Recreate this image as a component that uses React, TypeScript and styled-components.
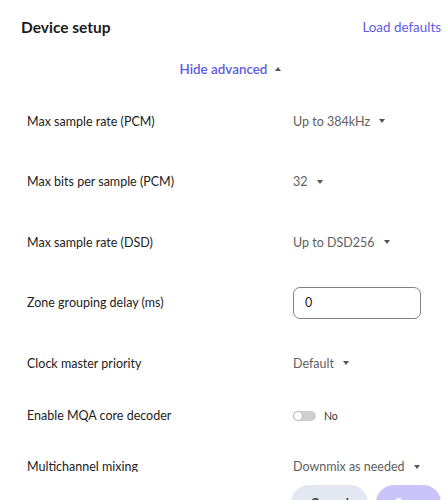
import React from "react";
import styled, { createGlobalStyle } from "styled-components";

const Global = createGlobalStyle`
  html, body { margin: 0; padding: 0; background: #fff; }
  body { font-family: Lato, "Noto Sans", sans-serif; color: #222; }
  * { box-sizing: border-box; }
`;

const Page = styled.div`
  width: 446px;
  height: 500px;
  overflow: hidden;
  display: flex;
  flex-direction: column;
  & > * { flex-shrink: 0; }
`;

const Header = styled.div`
  height: 54px;
  display: flex;
  align-items: center;
  justify-content: space-between;
  padding: 0 5px 0 21px;
`;

const Title = styled.h1`
  margin: 0;
  font-size: 15.5px;
  font-weight: 700;
  color: #1c1c1c;
`;

const LinkButton = styled.button<{ $bold?: boolean }>`
  border: 0;
  background: none;
  padding: 0 0 0 ${(p) => (p.$bold ? 15 : 0)}px;
  font-family: inherit;
  font-size: 13.4px;
  font-weight: ${(p) => (p.$bold ? 600 : 400)};
  color: #5b5be6;
  display: inline-flex;
  align-items: center;
  gap: 8px;
  cursor: pointer;
`;

const AdvancedBar = styled.div`
  height: 30px;
  display: flex;
  align-items: center;
  justify-content: center;
  margin-bottom: 7px;
`;

const Scroll = styled.div`
  height: 381px;
  overflow: hidden;
  padding-left: 27px;
`;

const Row = styled.div<{ $h?: number }>`
  height: ${(p) => p.$h ?? 60.5}px;
  display: grid;
  grid-template-columns: 266px 1fr;
  align-items: center;
`;

const Label = styled.div`
  font-size: 12.5px;
  color: #222;
`;

const Select = styled.div`
  display: inline-flex;
  align-items: center;
  gap: 9px;
  font-size: 12.5px;
  color: #5e5e5e;
`;

const Caret = styled.span<{ $up?: boolean }>`
  width: 0;
  height: 0;
  color: #555;
  border-left: 3.5px solid transparent;
  border-right: 3.5px solid transparent;
  ${(p) => (p.$up ? "border-bottom: 4px solid currentColor;" : "border-top: 4px solid currentColor;")}
`;

const Input = styled.input`
  width: 128px;
  height: 32px;
  border: 1px solid #808080;
  border-radius: 7px;
  padding: 0 11px;
  font-family: inherit;
  font-size: 12.5px;
  color: #222;
  outline: none;
`;

const ToggleWrap = styled.div`
  display: inline-flex;
  align-items: center;
  gap: 8px;
  font-size: 10.5px;
  color: #333;
`;

const Track = styled.span`
  position: relative;
  width: 23px;
  height: 10px;
  border-radius: 5px;
  background: #cfcfcf;
`;

const Thumb = styled.span`
  position: absolute;
  left: 0;
  top: 0;
  width: 10px;
  height: 10px;
  border-radius: 50%;
  background: #fff;
  border: 1px solid #b5b5b5;
`;

const Footer = styled.div`
  display: flex;
  justify-content: flex-end;
  gap: 8px;
  padding: 13px 5px 0 0;
`;

const Btn = styled.button<{ $primary?: boolean }>`
  height: 36px;
  border: 0;
  border-radius: 18px;
  padding: 0;
  width: ${(p) => (p.$primary ? 65 : 77)}px;
  background: ${(p) => (p.$primary ? "#c9c4f9" : "#e3e7f1")};
  color: ${(p) => (p.$primary ? "#fff" : "#333")};
  font-family: inherit;
  font-size: 13px;
  font-weight: 600;
`;

const Dropdown = ({ value }: { value: string }) => (
  <Select>
    {value}
    <Caret />
  </Select>
);

export default function App() {
  return (
    <Page>
      <Global />
      <Header>
        <Title>Device setup</Title>
        <LinkButton>Load defaults</LinkButton>
      </Header>
      <AdvancedBar>
        <LinkButton $bold>
          Hide advanced
          <Caret $up />
        </LinkButton>
      </AdvancedBar>
      <Scroll>
        <Row>
          <Label>Max sample rate (PCM)</Label>
          <Dropdown value="Up to 384kHz" />
        </Row>
        <Row>
          <Label>Max bits per sample (PCM)</Label>
          <Dropdown value="32" />
        </Row>
        <Row>
          <Label>Max sample rate (DSD)</Label>
          <Dropdown value="Up to DSD256" />
        </Row>
        <Row>
          <Label>Zone grouping delay (ms)</Label>
          <div>
            <Input defaultValue="0" />
          </div>
        </Row>
        <Row>
          <Label>Clock master priority</Label>
          <Dropdown value="Default" />
        </Row>
        <Row $h={44}>
          <Label>Enable MQA core decoder</Label>
          <ToggleWrap>
            <Track>
              <Thumb />
            </Track>
            No
          </ToggleWrap>
        </Row>
        <Row $h={58}>
          <Label>Multichannel mixing</Label>
          <Dropdown value="Downmix as needed" />
        </Row>
      </Scroll>
      <Footer>
        <Btn>Cancel</Btn>
        <Btn $primary>Save</Btn>
      </Footer>
    </Page>
  );
}
